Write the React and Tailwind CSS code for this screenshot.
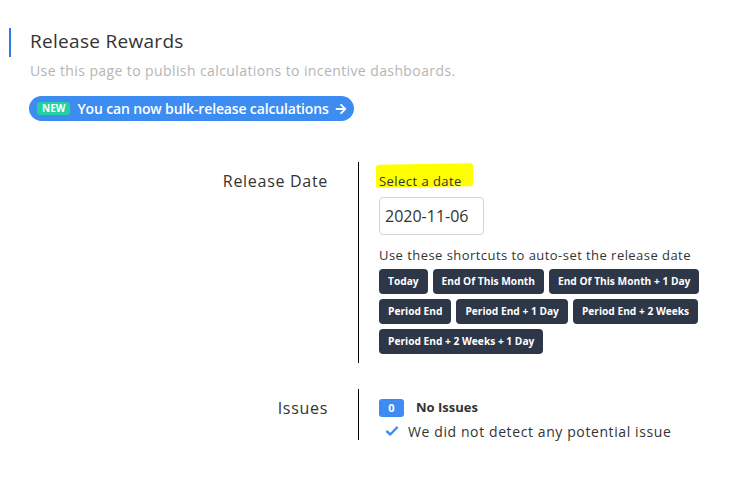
import React from "react";

const F = { fontFamily: '"Open Sans", "Liberation Sans", sans-serif' };

function Btn({ children }) {
  return (
    <button className="h-[25px] px-[9px] rounded-[4px] bg-[#2d3748] text-white text-[10.2px] font-bold leading-none">
      {children}
    </button>
  );
}

export default function App() {
  return (
    <div className="w-[735px] h-[481px] bg-white text-[#333]" style={F}>
      <div className="pt-[28px] flex">
        <div className="ml-[9px] w-[2px] h-[29px] bg-[#2f7be0]" />
        <div className="ml-[19px]">
          <div className="text-[19px] tracking-[0.3px] leading-[29px] text-[#333] -mt-[1px]">Release Rewards</div>
        </div>
      </div>
      <div className="ml-[30px] mt-[4px] text-[14px] tracking-[0.4px] leading-[20px] text-[#b5b5b5]">
        Use this page to publish calculations to incentive dashboards.
      </div>
      <div className="ml-[29px] mt-[15px]">
        <button className="h-[25px] w-[325px] rounded-full bg-[#3c8cf2] flex items-center pl-[8px] text-white text-[14px] tracking-[-0.15px] font-semibold">
          <span className="bg-[#21d19f] rounded-[3px] px-[5px] text-[10px] tracking-normal font-bold leading-[13px] mr-[7px]">NEW</span>
          You can now bulk-release calculations
          <svg className="ml-[6px]" width="12" height="12" viewBox="0 0 448 512" fill="white">
            <path d="M190.5 66.9l22.2-22.2c9.4-9.4 24.6-9.4 33.9 0L441 239c9.4 9.4 9.4 24.6 0 33.9L246.6 467.3c-9.4 9.4-24.6 9.4-33.9 0l-22.2-22.2c-9.5-9.5-9.3-25 .4-34.3L311.4 296H24c-13.3 0-24-10.7-24-24v-32c0-13.3 10.7-24 24-24h287.4L190.9 101.2c-9.8-9.3-10-24.8-.4-34.3z" />
          </svg>
        </button>
      </div>

      <div className="mt-[41px] flex">
        <div className="w-[328px] text-right text-[16px] tracking-[0.7px] leading-[20px] pt-[9px]">Release Date</div>
        <div className="ml-[30px] w-px bg-black h-[201px]" />
        <div className="ml-[20px] pt-[10px]">
          <div className="relative text-[13px] tracking-[0.45px] leading-[18px]">
            <div className="absolute left-[-3px] top-[-8px] w-[97px] h-[23px] bg-[#ffff00] rounded-[3px] -skew-y-1" />
            <span className="relative">Select a date</span>
          </div>
          <div className="mt-[7px] w-[105px] h-[38px] border border-[#d4d4d4] rounded-[4px] flex items-center pl-[5px] text-[16px]">
            2020-11-06
          </div>
          <div className="mt-[11px] text-[13px] tracking-[0.45px] leading-[18px]">Use these shortcuts to auto-set the release date</div>
          <div className="mt-[5px] flex flex-col gap-[5px]">
            <div className="flex gap-[5px]">
              <Btn>Today</Btn>
              <Btn>End Of This Month</Btn>
              <Btn>End Of This Month + 1 Day</Btn>
            </div>
            <div className="flex gap-[5px]">
              <Btn>Period End</Btn>
              <Btn>Period End + 1 Day</Btn>
              <Btn>Period End + 2 Weeks</Btn>
            </div>
            <div className="flex gap-[5px]">
              <Btn>Period End + 2 Weeks + 1 Day</Btn>
            </div>
          </div>
        </div>
      </div>

      <div className="mt-[26px] flex">
        <div className="w-[328px] text-right text-[16px] tracking-[0.7px] leading-[20px] pt-[9px]">Issues</div>
        <div className="ml-[30px] w-px bg-black h-[51px]" />
        <div className="ml-[20px] pt-[9px]">
          <div className="flex items-center">
            <span className="w-[25px] h-[18px] rounded-[3px] bg-[#3c8cf2] text-white text-[11px] font-bold flex items-center justify-center">0</span>
            <span className="ml-[12px] text-[13px] font-bold">No Issues</span>
          </div>
          <div className="flex items-center mt-[3px]">
            <svg className="ml-[7px]" width="12" height="10" viewBox="0 0 12 10">
              <path d="M1 5.5 L4.3 8.5 L11 1.5" stroke="#3c8cf2" strokeWidth="2.4" fill="none" strokeLinecap="round" strokeLinejoin="round" />
            </svg>
            <span className="ml-[10px] text-[14px] tracking-[0.6px]">We did not detect any potential issue</span>
          </div>
        </div>
      </div>
    </div>
  );
}
